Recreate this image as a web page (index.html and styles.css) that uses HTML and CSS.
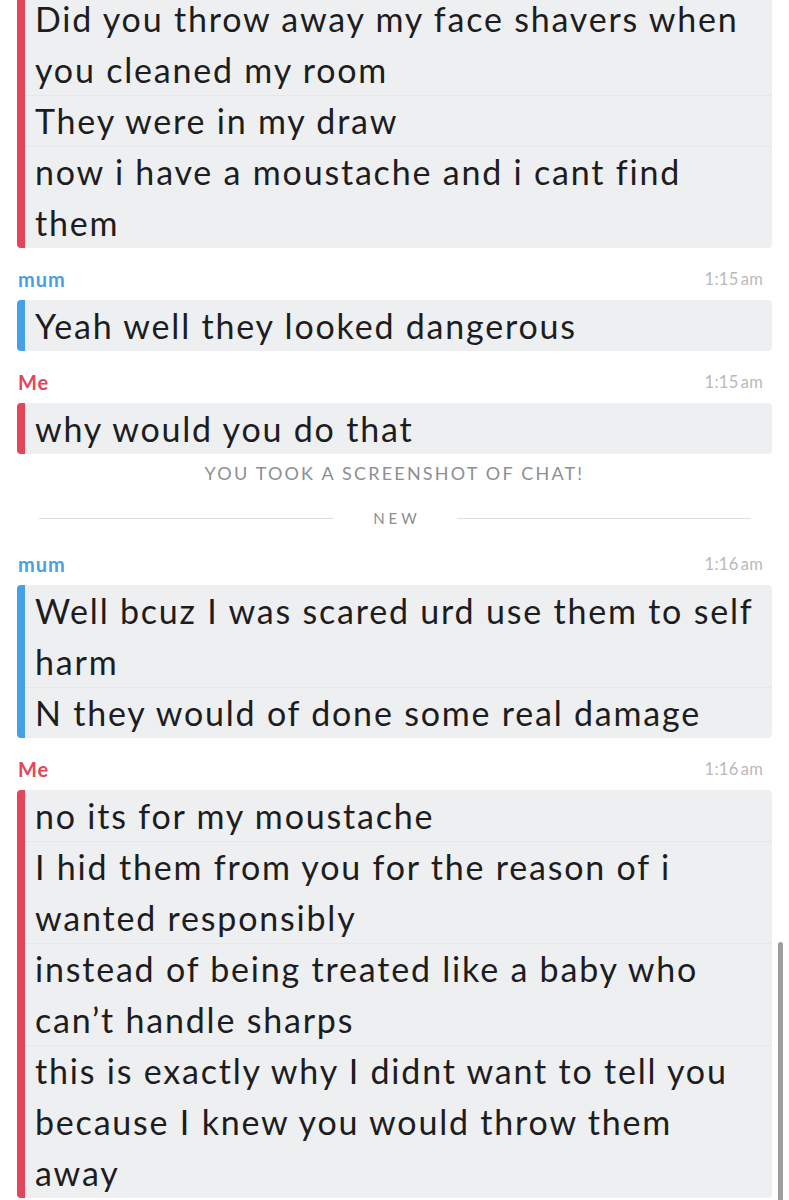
FILE: index.html
```html
<!DOCTYPE html>
<html lang="en">
<head>
<meta charset="utf-8">
<title>Chat</title>
<link rel="stylesheet" href="styles.css">
</head>
<body>
<div class="chat">
  <div class="bubble me first">
    <div class="msg">Did you throw away my face shavers when you cleaned my room</div>
    <div class="msg">They were in my draw</div>
    <div class="msg">now i have a moustache and i cant find them</div>
  </div>

  <div class="header"><span class="name mum-name">mum</span><span class="time">1:15<span class="ampm">am</span></span></div>
  <div class="bubble mum">
    <div class="msg">Yeah well they looked dangerous</div>
  </div>

  <div class="header"><span class="name me-name">Me</span><span class="time">1:15<span class="ampm">am</span></span></div>
  <div class="bubble me">
    <div class="msg">why would you do that</div>
  </div>

  <div class="notice">You took a screenshot of chat!</div>
  <div class="divider"><span class="rule"></span><span class="divider-label">New</span><span class="rule"></span></div>

  <div class="header"><span class="name mum-name">mum</span><span class="time">1:16<span class="ampm">am</span></span></div>
  <div class="bubble mum">
    <div class="msg">Well bcuz I was scared urd use them to self harm</div>
    <div class="msg">N they would of done some real damage</div>
  </div>

  <div class="header"><span class="name me-name">Me</span><span class="time">1:16<span class="ampm">am</span></span></div>
  <div class="bubble me">
    <div class="msg">no its for my moustache</div>
    <div class="msg">I hid them from you for the reason of i wanted responsibly</div>
    <div class="msg">instead of being treated like a baby who can’t handle sharps</div>
    <div class="msg">this is exactly why I didnt want to tell you because I knew you would throw them away</div>
  </div>
</div>
<div class="scrollbar"></div>
</body>
</html>
```

FILE: styles.css
```css
html, body {
  margin: 0;
  padding: 0;
  background: #ffffff;
  overflow: hidden;
}

body {
  font-family: "Lato", "Noto Sans", "Liberation Sans", sans-serif;
  color: #1d1d1f;
  position: relative;
  height: 1200px;
}

.chat {
  padding: 0 17px;
  margin-top: -7px;
}

.bubble {
  background: #eeeff1;
  border-left: 8px solid #e1465a;
  border-radius: 4px;
  overflow: hidden;
}

.bubble.mum {
  border-left-color: #47a0e6;
}

.msg {
  padding: 0 12px 0 10px;
  font-size: 34px;
  line-height: 51px;
  letter-spacing: 1.8px;
}

.msg + .msg {
  box-shadow: inset 0 1px 0 #e6e7ea;
}

.header {
  display: flex;
  justify-content: space-between;
  align-items: center;
  height: 21px;
  padding: 21px 9px 10px 1px;
  line-height: 21px;
  overflow: hidden;
}

.name {
  font-size: 20px;
  font-weight: 700;
  letter-spacing: 1px;
}

.mum-name {
  color: #47a0e6;
}

.me-name {
  color: #e1465a;
}

.time {
  font-size: 16.5px;
  color: #b9b9bd;
  letter-spacing: 0.3px;
}

.ampm {
  margin-left: 2px;
}

.notice {
  margin-top: 9px;
  text-align: center;
  text-transform: uppercase;
  font-size: 18px;
  line-height: 20px;
  letter-spacing: 2.2px;
  color: #8e8e93;
}

.divider {
  display: flex;
  align-items: center;
  gap: 40px;
  padding: 0 21px 0 22px;
  margin-top: 25px;
  margin-bottom: 5px;
  height: 20px;
  line-height: 20px;
}

.rule {
  flex: 1;
  height: 1px;
  background: #dddde0;
}

.divider-label {
  font-size: 15px;
  letter-spacing: 4px;
  margin-right: -4px;
  color: #8e8e93;
  text-transform: uppercase;
}

.scrollbar {
  position: absolute;
  top: 942px;
  right: 6px;
  width: 5px;
  height: 280px;
  border-radius: 3px;
  background: #9d9d9f;
}
```
